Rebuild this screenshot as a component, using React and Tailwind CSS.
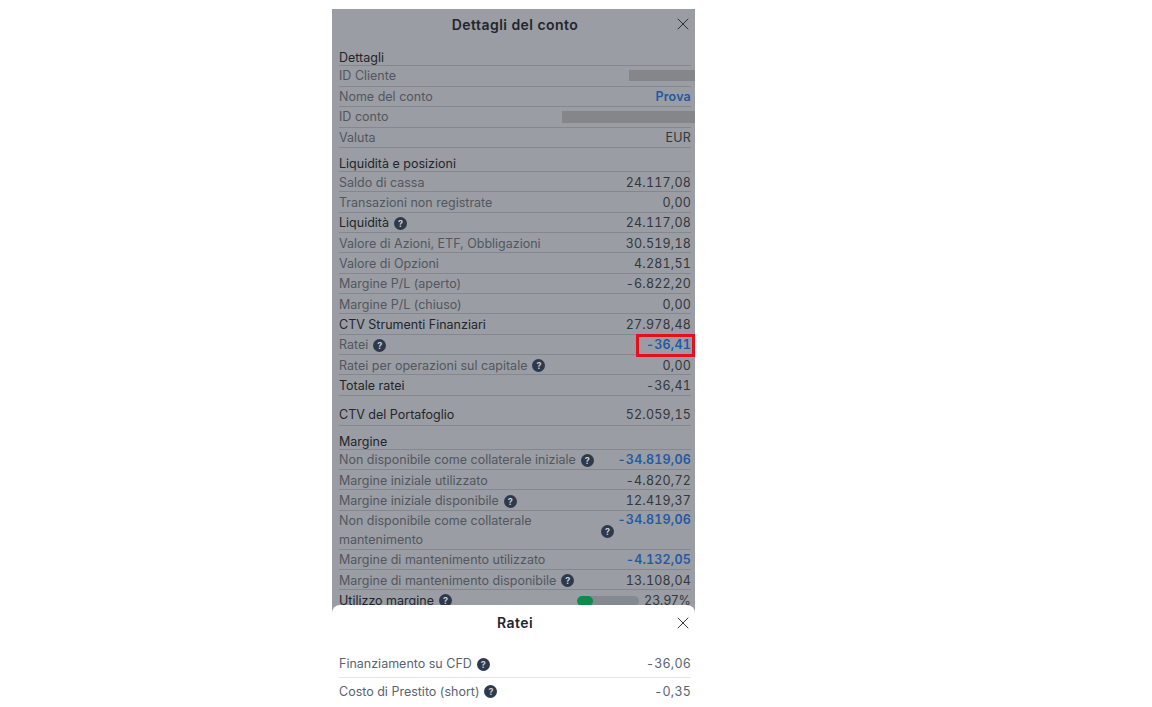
import React from 'react';
import { X } from 'lucide-react';

const NUM = 'text-[12.5px] tabular-nums tracking-[0.2px]';

const Help = () => (
  <span className="ml-[5px] inline-flex h-[13px] w-[13px] shrink-0 items-center justify-center rounded-full bg-[#2e3a4b] text-[9px] font-bold leading-none text-[#c9ccd1]">
    ?
  </span>
);

const Row = ({ label, value, help, tone = 'label', valueTone = 'value', height = 'h-[20.35px] pt-[2px]' }) => (
  <div className={`flex items-center justify-between border-b border-[#84878d] ${height}`}>
    <div className={`flex items-center ${tone === 'strong' ? 'text-[#22262c]' : 'text-[#52575f]'}`}>
      <span>{label}</span>
      {help && <Help />}
    </div>
    <span className={`${NUM} ${valueTone === 'blue' ? 'font-semibold text-[#1f5aa6]' : 'text-[#33373e]'}`}>{value}</span>
  </div>
);

const Heading = ({ children }) => (
  <div className="flex h-[24px] items-end border-b border-[#84878d] text-[#22262c] leading-[14px]">{children}</div>
);

const Redacted = ({ className }) => <div className={`-mr-[4px] bg-[#85868a] ${className}`} />;

const App = () => {
  return (
    <div className="h-[707px] w-[1152px] overflow-hidden bg-white pt-[9px] [font-family:Inter,sans-serif]">
      <div className="relative ml-[332px] h-[698px] w-[363px] overflow-hidden bg-[#9a9da3] text-[12.5px] leading-[16px]">
        <div className="relative flex h-[33px] items-center justify-center pb-[2px] pl-[3px] text-[14px] font-semibold tracking-[0.45px] text-[#22262c]">
          Dettagli del conto
          <X size={20} strokeWidth={1.1} className="absolute right-[2px] top-[5px] text-[#22262c]" />
        </div>

        <div className="pl-[7px] pr-[4px]">
          <Heading>Dettagli</Heading>
          <div className="flex h-[20.6px] items-center justify-between border-b border-[#84878d] text-[#52575f]">
            <span>ID Cliente</span>
            <Redacted className="h-[11px] w-[66px]" />
          </div>
          <Row label="Nome del conto" value="Prova" valueTone="blue" />
          <div className="flex h-[20.6px] items-center justify-between border-b border-[#84878d] text-[#52575f]">
            <span>ID conto</span>
            <Redacted className="h-[12px] w-[133px]" />
          </div>
          <Row label="Valuta" value="EUR" />

          <Heading>Liquidità e posizioni</Heading>
          <Row label="Saldo di cassa" value="24.117,08" />
          <Row label="Transazioni non registrate" value="0,00" />
          <Row label="Liquidità" value="24.117,08" help tone="strong" />
          <Row label="Valore di Azioni, ETF, Obbligazioni" value="30.519,18" />
          <Row label="Valore di Opzioni" value="4.281,51" />
          <Row label="Margine P/L (aperto)" value="-6.822,20" />
          <Row label="Margine P/L (chiuso)" value="0,00" />
          <Row label="CTV Strumenti Finanziari" value="27.978,48" tone="strong" />
          <div className="relative">
            <Row label="Ratei" value="-36,41" help valueTone="blue" />
            <div className="absolute -top-[1px] right-[-4px] h-[23px] w-[59px] border-[3px] border-[#e3101e]" />
          </div>
          <Row label="Ratei per operazioni sul capitale" value="0,00" help />
          <Row label="Totale ratei" value="-36,41" tone="strong" />
          <Row label="CTV del Portafoglio" value="52.059,15" tone="strong" height="h-[30px] pt-[9px]" />

          <Heading>Margine</Heading>
          <Row label="Non disponibile come collaterale iniziale" value="-34.819,06" help valueTone="blue" />
          <Row label="Margine iniziale utilizzato" value="-4.820,72" />
          <Row label="Margine iniziale disponibile" value="12.419,37" help />
          <div className="flex h-[39px] items-start justify-between border-b border-[#84878d] text-[#52575f]">
            <div className="flex items-center">
              <span className="w-[200px] leading-[19px]">Non disponibile come collaterale mantenimento</span>
              <span className="ml-[57px] mt-[2px]"><Help /></span>
            </div>
            <span className={`${NUM} pt-[1px] font-semibold text-[#1f5aa6]`}>-34.819,06</span>
          </div>
          <Row label="Margine di mantenimento utilizzato" value="-4.132,05" valueTone="blue" />
          <Row label="Margine di mantenimento disponibile" value="13.108,04" help />
          <div className="flex h-[20.35px] items-center justify-between text-[#22262c]">
            <div className="flex items-center">
              <span>Utilizzo margine</span>
              <Help />
            </div>
            <div className="flex items-center gap-[5px] tracking-[0.2px] text-[#33373e]">
              <div className="h-[10px] w-[62px] overflow-hidden rounded-full bg-[#858a92]">
                <div className="h-full rounded-full bg-[#0f8a4c]" style={{ width: '25%' }} />
              </div>
              <span>23.97%</span>
            </div>
          </div>
        </div>

        {/* sheet aperto sopra il dettaglio */}
        <div className="absolute inset-x-0 bottom-0 h-[102px] rounded-t-[8px] bg-white pl-[7px] pr-[4px]">
          <div className="relative flex h-[36px] items-center justify-center text-[14px] font-semibold tracking-[0.45px] text-[#22262c]">
            Ratei
            <X size={20} strokeWidth={1.1} className="absolute right-[-2px] top-[8px] text-[#22262c]" />
          </div>
          <div className="flex h-[37px] items-end justify-between border-b border-[#e4e6e9] pb-[5px] text-[#5b6370]">
            <div className="flex items-center">
              <span>Finanziamento su CFD</span>
              <Help />
            </div>
            <span className={NUM}>-36,06</span>
          </div>
          <div className="flex h-[27px] items-center justify-between text-[#5b6370]">
            <div className="flex items-center">
              <span>Costo di Prestito (short)</span>
              <Help />
            </div>
            <span className={NUM}>-0,35</span>
          </div>
        </div>
      </div>
    </div>
  );
};

export default App;
